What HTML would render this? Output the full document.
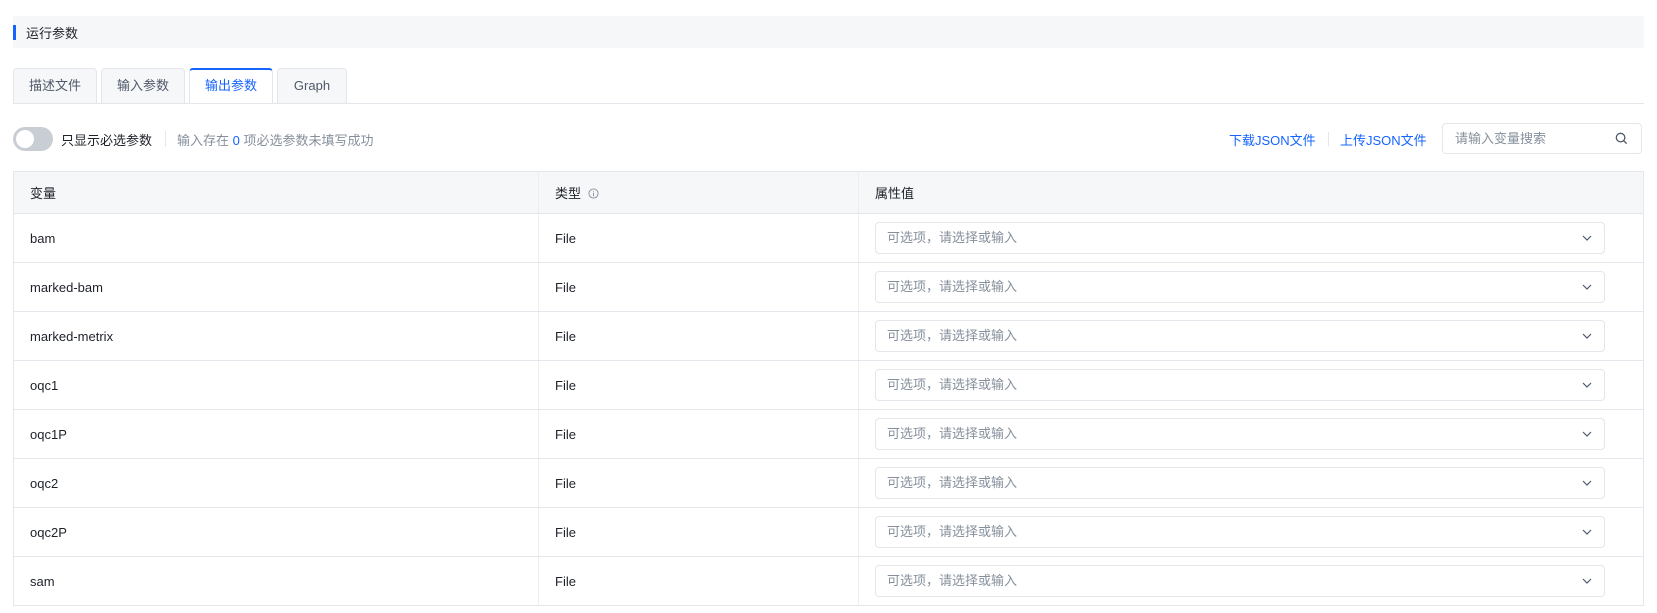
<!DOCTYPE html>
<html><head><meta charset="utf-8"><style>
*{box-sizing:border-box;margin:0;padding:0}
body{width:1657px;height:613px;background:#fff;font-family:"Liberation Sans","Noto Sans CJK SC",sans-serif;font-size:13px;color:#1d2129;position:relative;overflow:hidden}
.abs{position:absolute}
.hdr{left:13px;top:16px;width:1631px;height:32px;background:#f6f7f9}
.hdr .bar{position:absolute;left:0;top:9px;width:3px;height:15px;background:#1664ff}
.hdr span{position:absolute;left:13px;top:7px;font-size:13px}
.tab{top:68px;height:35px;border:1px solid #e5e6eb;border-bottom:none;border-radius:4px 4px 0 0;background:#f6f7f9;text-align:center;line-height:34px;color:#4e5969;font-size:13px}
.tab.act{background:#fff;color:#1664ff;border-top:2px solid #1664ff;line-height:32px;height:36px}
.tabline{left:13px;top:103px;width:1631px;height:1px;background:#e5e6eb}
.tog{left:13px;top:127px;width:40px;height:24px;border-radius:12px;background:#c9cdd4}
.tog i{position:absolute;left:3px;top:3px;width:18px;height:18px;border-radius:50%;background:#fff}
.blue{color:#1664ff}
table{position:absolute;left:13px;top:171px;width:1631px;border-collapse:collapse;border:1px solid #e5e6eb}
td,th{border-bottom:1px solid #e5e6eb;height:49px;text-align:left;font-weight:normal;vertical-align:middle}
th{height:42px;background:#f6f7f9}
td.c1,th.c1{padding-left:16px;width:525px;border-right:1px solid #eceef2}
td.c2,th.c2{padding-left:16px;width:320px;border-right:1px solid #eceef2}
td.c3,th.c3{padding-left:16px}
.sel{width:730px;height:32px;border:1px solid #e5e6eb;border-radius:4px;position:relative;color:#86909c;line-height:30px;padding-left:11px;font-size:13px}
.sel svg{position:absolute;right:12px;top:11px}
</style></head><body>
<div class="abs hdr"><div class="bar"></div><span>运行参数</span></div>
<div class="abs tab" style="left:13px;width:84px">描述文件</div>
<div class="abs tab" style="left:101px;width:84px">输入参数</div>
<div class="abs tab act" style="left:189px;width:84px">输出参数</div>
<div class="abs tab" style="left:277px;width:70px">Graph</div>
<div class="abs tabline"></div>
<div class="abs tog"><i></i></div>
<div class="abs" style="left:61px;top:130px;font-size:13px">只显示必选参数</div>
<div class="abs" style="left:165px;top:131px;width:1px;height:16px;background:#e5e6eb"></div>
<div class="abs" style="left:177px;top:130px;color:#86909c">输入存在 <span class="blue">0</span> 项必选参数未填写成功</div>
<div class="abs blue" style="left:1229px;top:130px">下载JSON文件</div>
<div class="abs" style="left:1328px;top:132px;width:1px;height:14px;background:#e5e6eb"></div>
<div class="abs blue" style="left:1340px;top:130px">上传JSON文件</div>
<div class="abs" style="left:1442px;top:123px;width:200px;height:31px;border:1px solid #e5e6eb;border-radius:4px;color:#86909c;padding-left:12px;line-height:29px">请输入变量搜索
<svg width="13" height="13" viewBox="0 0 14 14" style="position:absolute;right:13px;top:8px"><circle cx="6" cy="6" r="4.6" fill="none" stroke="#4e5969" stroke-width="1.4"/><path d="M9.5 9.5L12.5 12.5" stroke="#4e5969" stroke-width="1.4"/></svg></div>
<table>
<tr><th class="c1">变量</th><th class="c2">类型 <svg width="11" height="11" viewBox="0 0 12 12" style="vertical-align:-1px;margin-left:3px"><circle cx="6" cy="6" r="5" fill="none" stroke="#86909c"/><path d="M6 5v4M6 3v1" stroke="#86909c"/></svg></th><th class="c3">属性值</th></tr>
<tr><td class="c1">bam</td><td class="c2">File</td><td class="c3"><div class="sel">可选项，请选择或输入<svg width="10" height="8" viewBox="0 0 10 8"><path d="M1 2l4 4 4-4" fill="none" stroke="#4e5969" stroke-width="1.2"/></svg></div></td></tr>
<tr><td class="c1">marked-bam</td><td class="c2">File</td><td class="c3"><div class="sel">可选项，请选择或输入<svg width="10" height="8" viewBox="0 0 10 8"><path d="M1 2l4 4 4-4" fill="none" stroke="#4e5969" stroke-width="1.2"/></svg></div></td></tr>
<tr><td class="c1">marked-metrix</td><td class="c2">File</td><td class="c3"><div class="sel">可选项，请选择或输入<svg width="10" height="8" viewBox="0 0 10 8"><path d="M1 2l4 4 4-4" fill="none" stroke="#4e5969" stroke-width="1.2"/></svg></div></td></tr>
<tr><td class="c1">oqc1</td><td class="c2">File</td><td class="c3"><div class="sel">可选项，请选择或输入<svg width="10" height="8" viewBox="0 0 10 8"><path d="M1 2l4 4 4-4" fill="none" stroke="#4e5969" stroke-width="1.2"/></svg></div></td></tr>
<tr><td class="c1">oqc1P</td><td class="c2">File</td><td class="c3"><div class="sel">可选项，请选择或输入<svg width="10" height="8" viewBox="0 0 10 8"><path d="M1 2l4 4 4-4" fill="none" stroke="#4e5969" stroke-width="1.2"/></svg></div></td></tr>
<tr><td class="c1">oqc2</td><td class="c2">File</td><td class="c3"><div class="sel">可选项，请选择或输入<svg width="10" height="8" viewBox="0 0 10 8"><path d="M1 2l4 4 4-4" fill="none" stroke="#4e5969" stroke-width="1.2"/></svg></div></td></tr>
<tr><td class="c1">oqc2P</td><td class="c2">File</td><td class="c3"><div class="sel">可选项，请选择或输入<svg width="10" height="8" viewBox="0 0 10 8"><path d="M1 2l4 4 4-4" fill="none" stroke="#4e5969" stroke-width="1.2"/></svg></div></td></tr>
<tr><td class="c1">sam</td><td class="c2">File</td><td class="c3"><div class="sel">可选项，请选择或输入<svg width="10" height="8" viewBox="0 0 10 8"><path d="M1 2l4 4 4-4" fill="none" stroke="#4e5969" stroke-width="1.2"/></svg></div></td></tr>
</table>
</body></html>
